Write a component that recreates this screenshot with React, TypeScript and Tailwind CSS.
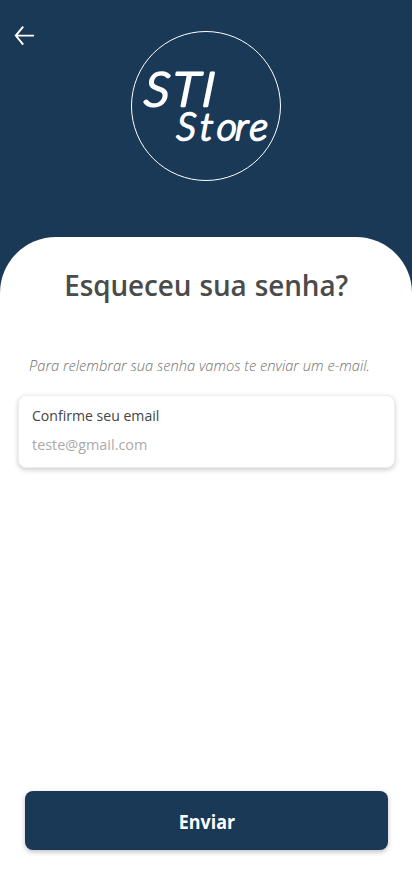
import React from "react";

const BackArrow = () => (
  <svg className="block h-5 w-5" viewBox="0 0 20 20" fill="none" stroke="white" strokeWidth="1.9">
    <path d="M9.2 .6L1.8 9.6l7.4 9.1M1.8 9.6H20" />
  </svg>
);

const Logo = () => (
  <svg
    className="block h-[152px] w-[152px] font-['Lato',sans-serif] font-light italic"
    viewBox="0 0 152 152"
    fill="white"
    stroke="white"
    strokeLinejoin="round"
    strokeLinecap="round"
    role="img"
    aria-label="STI Store"
  >
    <circle cx="76" cy="76" r="74.5" fill="none" strokeWidth="1" />
    <text transform="translate(14 76) skewX(-4) scale(1.08 1)" x="-0.5 25.5 53" y="0" fontSize="47" strokeWidth="2.4">STI</text>
    <text transform="translate(46 110) skewX(-3) scale(1.03 1)" x="0 22.5 39 57 71" y="0" fontSize="38" strokeWidth="2">Store</text>
  </svg>
);

export default function App() {
  return (
    <main className="flex h-[875px] w-full flex-col bg-[#193957] font-['Open_Sans','Noto_Sans',sans-serif]">
      <header className="grid h-[237px] shrink-0 grid-cols-[130px_152px_1fr] items-start">
        <button aria-label="Voltar" className="mt-[26px] ml-[14px] w-5">
          <BackArrow />
        </button>
        <div className="mt-[30px]">
          <Logo />
        </div>
      </header>
      <section className="flex flex-1 flex-col rounded-t-[56px] bg-white pt-7">
        <h1 className="text-center text-[29.5px] leading-[40px] font-semibold whitespace-nowrap text-[#4b4b4b]">
          <span className="inline-block origin-center scale-x-[0.945] tracking-[-0.1px] [word-spacing:1px]">Esqueceu sua senha?</span>
        </h1>
        <p className="mt-[50px] ml-[29px] origin-left scale-x-[0.979] text-[15px] leading-5 font-light whitespace-nowrap text-[#707070] italic">
          Para relembrar sua senha vamos te enviar um e-mail.
        </p>
        <label className="mx-[18px] mt-5 flex h-[73px] w-[377px] flex-col rounded-lg border border-[#eee] bg-white px-[13px] pt-[9px] shadow-[0_2px_5px_rgba(0,0,0,0.2)]">
          <span className="origin-left scale-x-[0.938] text-[15px] leading-5 text-[#444]">Confirme seu email</span>
          <input
            className="mt-[9px] h-5 w-full origin-left scale-x-[0.96] p-0 text-[15px] leading-5 outline-none placeholder:text-[#aaa]"
            type="email"
            placeholder="teste@gmail.com"
          />
        </label>
        <button className="mx-[25px] mt-auto mb-[25px] h-[59px] w-[363px] rounded-lg bg-[#193957] pt-[3px] text-[19px] font-bold text-white shadow-[0_2px_5px_rgba(0,0,0,0.25)]">
          <span className="inline-block scale-x-[0.94]">Enviar</span>
        </button>
      </section>
    </main>
  );
}
